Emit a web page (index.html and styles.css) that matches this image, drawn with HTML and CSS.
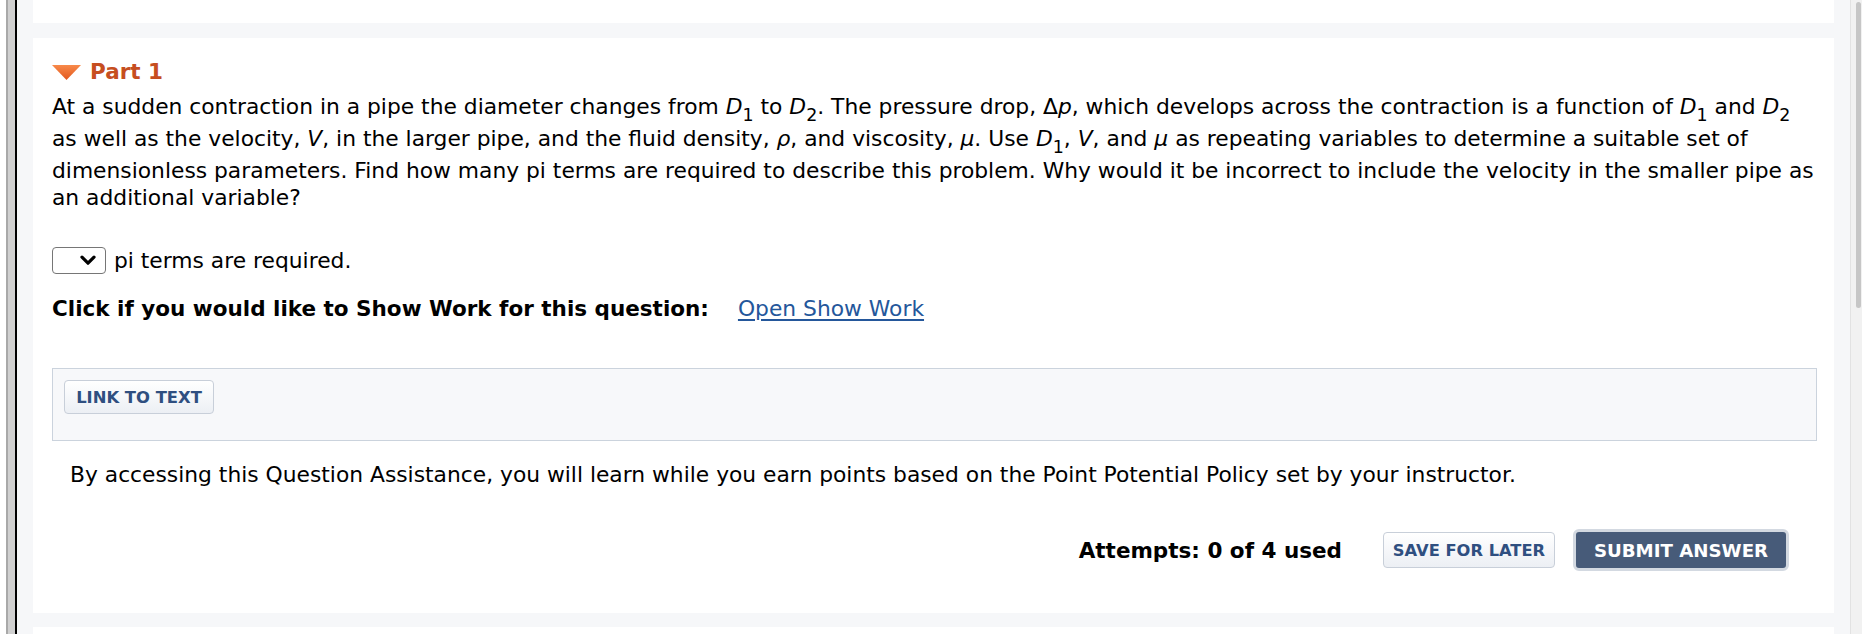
FILE: index.html
```html
<!DOCTYPE html>
<html lang="en">
<head>
<meta charset="utf-8">
<title>Part 1</title>
<link rel="stylesheet" href="styles.css">
</head>
<body>
<div class="frame">
  <div class="rail"></div>
  <main class="stage">
    <div class="card card-prev"></div>
    <section class="card question">
      <h2 class="part-head">
        <svg class="caret" width="29" height="15" viewBox="0 0 29 15" aria-hidden="true">
          <defs>
            <linearGradient id="cg" x1="0" y1="0" x2="0" y2="1">
              <stop offset="0" stop-color="#f88a4a"/>
              <stop offset="1" stop-color="#e2561c"/>
            </linearGradient>
          </defs>
          <polygon points="0,0 29,0 14.5,15" fill="url(#cg)"/>
        </svg>
        <span>Part 1</span>
      </h2>
      <p class="prompt">At a sudden contraction in a pipe the diameter changes from <i>D</i><sub>1</sub> to <i>D</i><sub>2</sub>. The pressure drop, Δ<i>p</i>, which develops across the contraction is a function of <i>D</i><sub>1</sub> and <i>D</i><sub>2</sub> as well as the velocity, <i>V</i>, in the larger pipe, and the fluid density, <i>ρ</i>, and viscosity, <i>μ</i>. Use <i>D</i><sub>1</sub>, <i>V</i>, and <i>μ</i> as repeating variables to determine a suitable set of dimensionless parameters. Find how many pi terms are required to describe this problem. Why would it be incorrect to include the velocity in the smaller pipe as an additional variable?</p>
      <div class="answer-row">
        <span class="select-box">
          <svg width="16" height="11" viewBox="0 0 16 11" aria-hidden="true"><path d="M2 2.2 L8 8.2 L14 2.2" fill="none" stroke="#000" stroke-width="3.2" stroke-linecap="round" stroke-linejoin="round"/></svg>
        </span>
        <span>pi terms are required.</span>
      </div>
      <div class="show-work">
        <strong>Click if you would like to Show Work for this question:</strong>
        <a href="#" class="link">Open Show Work</a>
      </div>
      <div class="assist">
        <button class="btn btn-light btn-small" type="button">LINK TO TEXT</button>
      </div>
      <p class="policy">By accessing this Question Assistance, you will learn while you earn points based on the Point Potential Policy set by your instructor.</p>
      <div class="actions">
        <strong class="attempts">Attempts: 0 of 4 used</strong>
        <button class="btn btn-light btn-save" type="button">SAVE FOR LATER</button>
        <button class="btn btn-dark" type="button">SUBMIT ANSWER</button>
      </div>
    </section>
    <div class="card card-next"></div>
  </main>
  <div class="scrollbar"><div class="thumb"></div></div>
</div>
</body>
</html>
```

FILE: styles.css
```css
html, body {
  margin: 0;
  padding: 0;
  background: #fff;
}

body {
  font-family: "DejaVu Sans", Verdana, sans-serif;
  font-size: 21.8px;
  color: #000;
}

strong {
  font-size: 21.5px;
}

.frame {
  display: flex;
  height: 634px;
  overflow: hidden;
  padding-left: 6px;
  box-sizing: border-box;
}

.rail {
  width: 7px;
  flex: none;
  background: #d0d0d0;
  border-left: 2px solid #a9a9a9;
  border-right: 2px solid #000;
}

.stage {
  flex: 1;
  background: #f6f7f9;
  padding: 0 16px;
  display: flex;
  flex-direction: column;
}

.card {
  background: #fff;
}

.card-prev {
  height: 23px;
  flex: none;
}

.card-next {
  flex: 1;
  margin-top: 14px;
}

.question {
  flex: none;
  margin-top: 15px;
  height: 575px;
  box-sizing: border-box;
  padding: 20px 17px 0 19px;
}

.part-head {
  margin: 0;
  display: flex;
  align-items: center;
  gap: 9px;
  font-size: 21.5px;
  font-weight: bold;
  line-height: 27px;
  color: #c64e1f;
}

.caret {
  display: block;
  margin-top: 2px;
}

.prompt {
  margin: 8px 0 0;
  line-height: 27px;
}

.prompt sub {
  font-size: 0.8em;
  line-height: 20px;
  vertical-align: -7px;
}

.answer-row {
  margin-top: 36px;
  display: flex;
  align-items: center;
  gap: 8px;
  line-height: 27px;
}

.select-box {
  width: 54px;
  height: 27px;
  box-sizing: border-box;
  border: 1px solid #767676;
  border-radius: 4px;
  background: #fff;
  display: flex;
  align-items: center;
  justify-content: flex-end;
  padding-right: 9px;
}

.select-box svg {
  display: block;
}

.show-work {
  margin-top: 21px;
  line-height: 27px;
  display: flex;
  align-items: baseline;
  gap: 29px;
}

.link {
  color: #24579b;
  text-decoration: underline;
  text-underline-offset: 3px;
}

.assist {
  margin-top: 46px;
  border: 1px solid #cbd3dd;
  background: #f7f8fa;
  padding: 11px 11px 26px;
}

.btn {
  font-family: "DejaVu Sans", Verdana, sans-serif;
  font-weight: bold;
  border-radius: 4px;
  cursor: pointer;
  display: inline-flex;
  align-items: center;
  justify-content: center;
  box-sizing: border-box;
  padding: 0;
}

.btn-light {
  background: linear-gradient(#ffffff, #eceff4);
  border: 1px solid #c8cfd9;
  color: #2f4f80;
}

.btn-small {
  width: 150px;
  height: 34px;
  font-size: 16.4px;
}

.policy {
  margin: 20px 0 0 18px;
  line-height: 27px;
}

.actions {
  margin-top: 41px;
  margin-right: 28px;
  display: flex;
  justify-content: flex-end;
  align-items: center;
}

.attempts {
  margin-right: 41px;
}

.btn-save {
  width: 172px;
  height: 36px;
  font-size: 16.3px;
  margin-right: 18px;
}

.btn-dark {
  width: 216px;
  height: 42px;
  font-size: 18.2px;
  color: #fff;
  background: #475b79;
  border: 3px solid #d3d9e1;
  border-radius: 6px;
}

.scrollbar {
  width: 12px;
  flex: none;
  background: #f1f1f1;
  border-left: 1px solid #e2e2e2;
  box-sizing: border-box;
  padding: 2px 1px 0 5px;
}

.thumb {
  height: 306px;
  background: #c6c6c6;
  border-radius: 3px;
}
```
